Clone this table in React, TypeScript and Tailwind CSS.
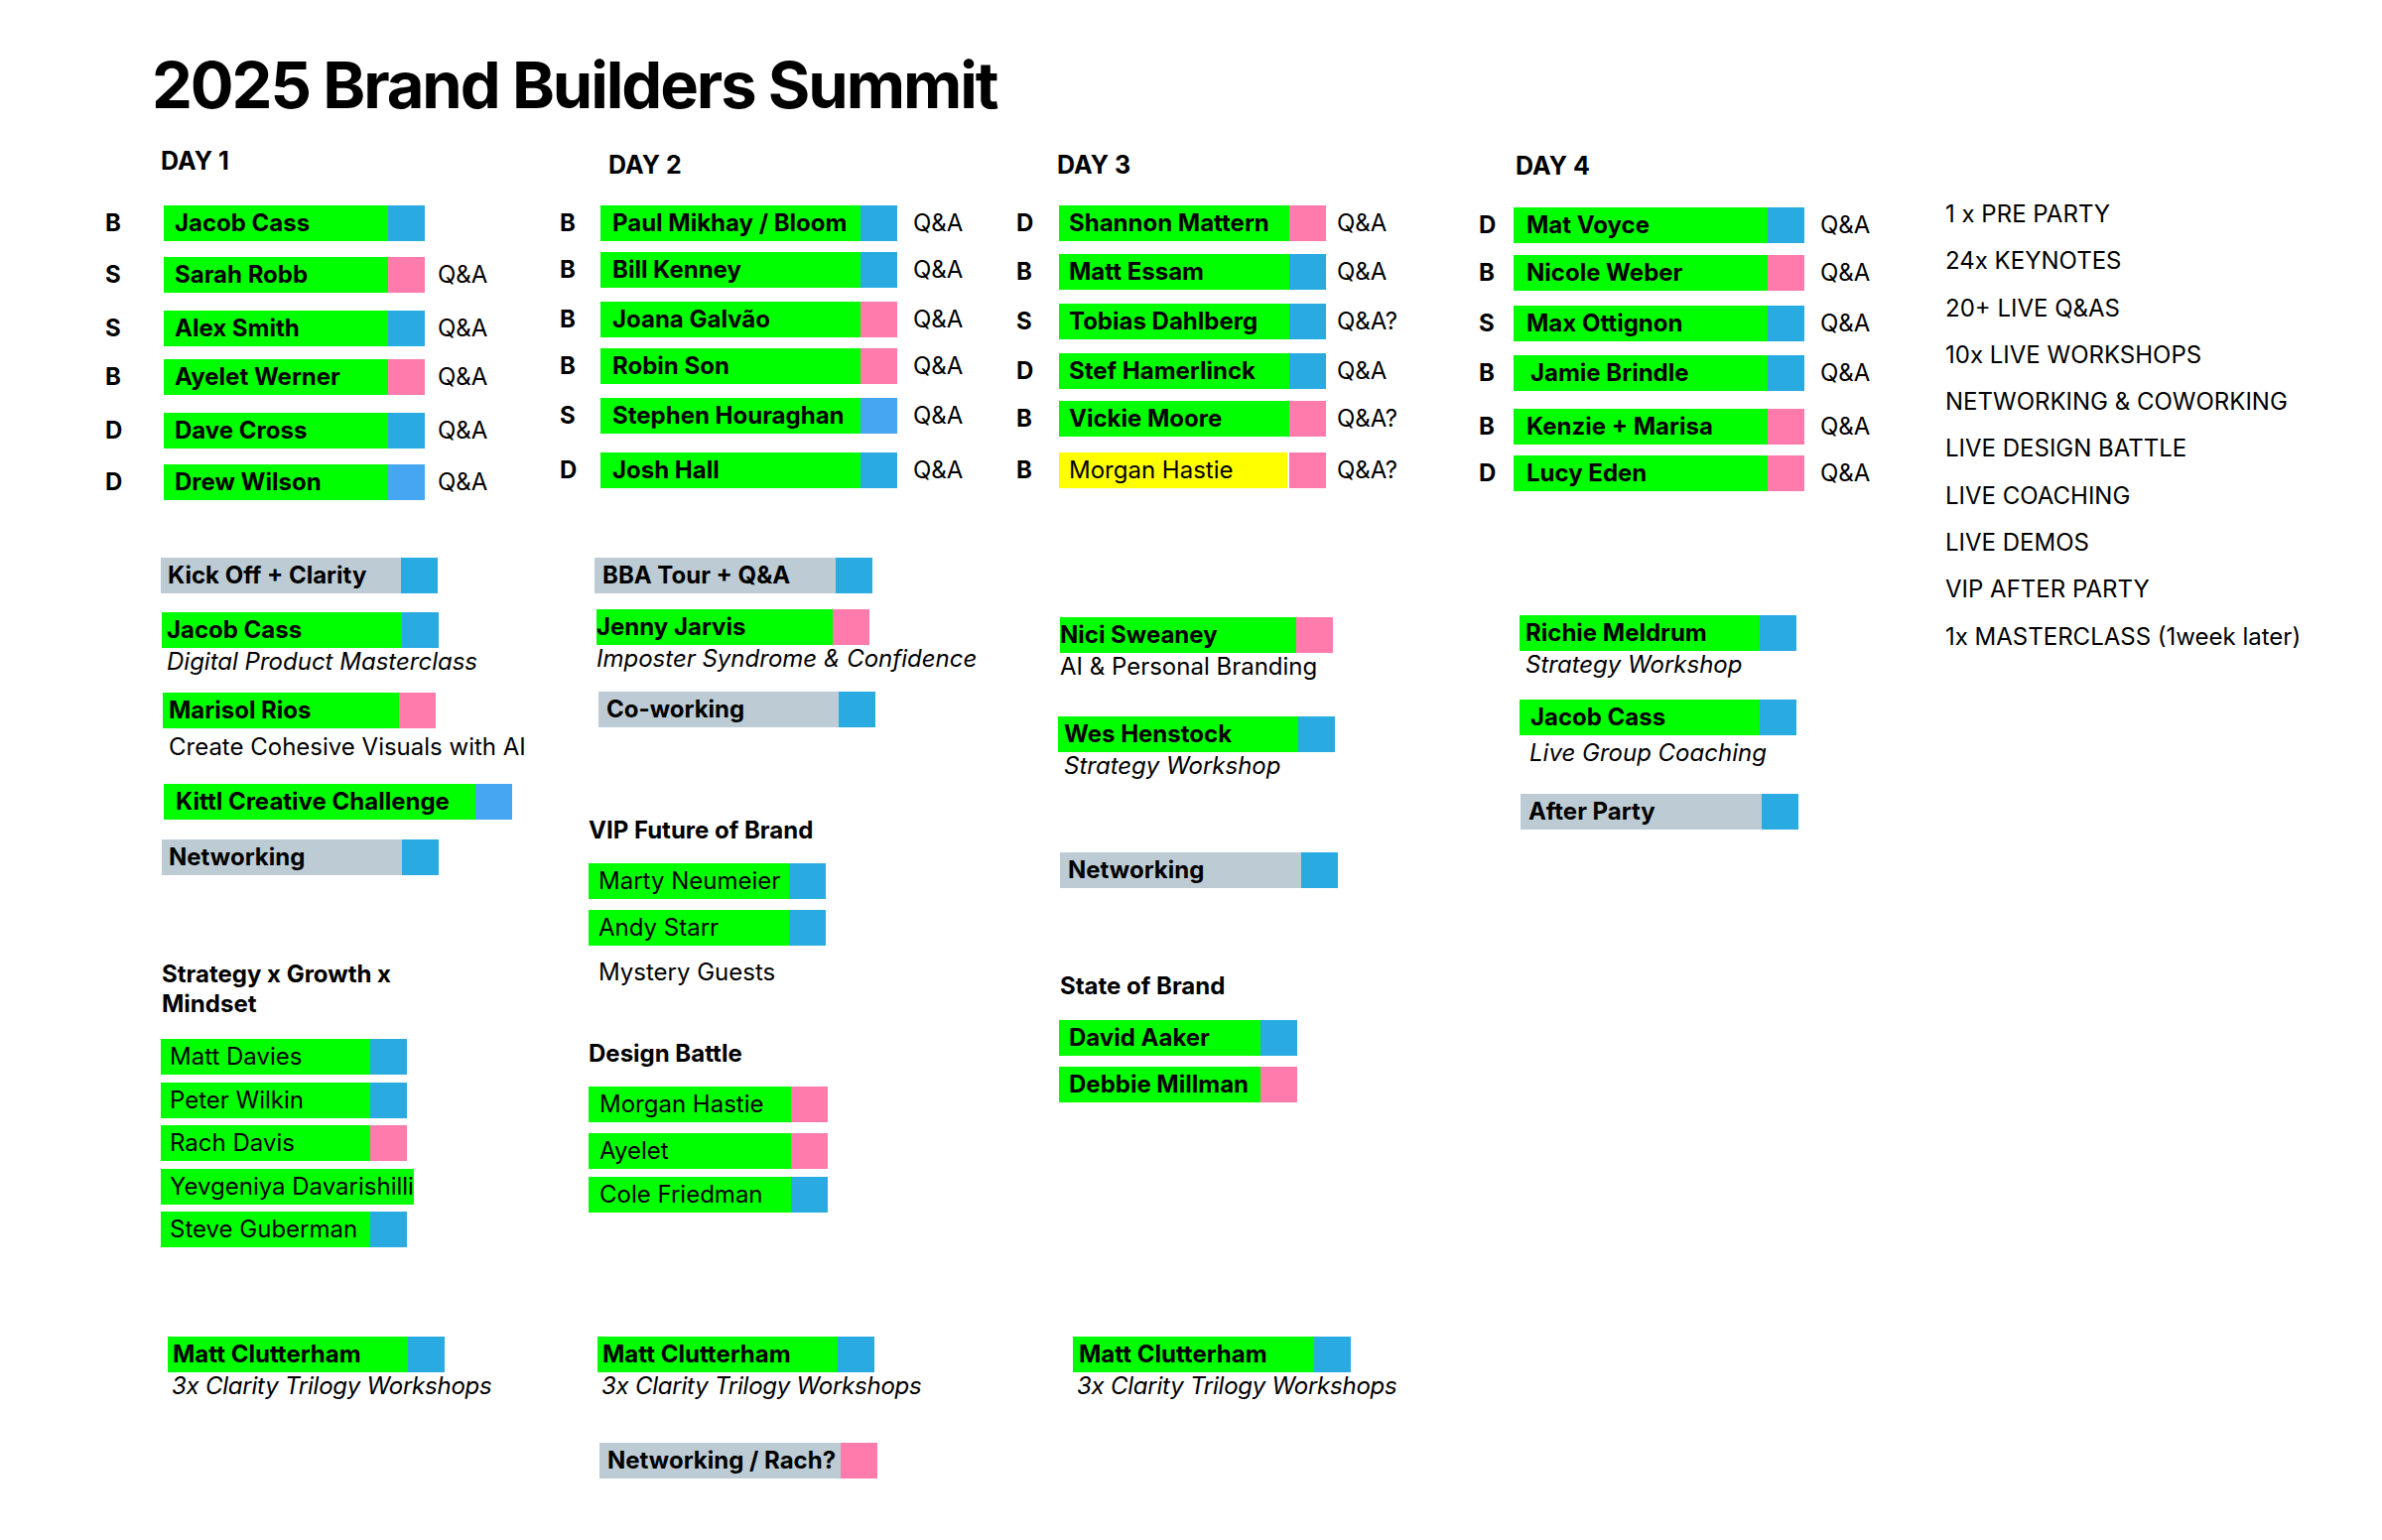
import type { ReactNode } from 'react';

type Seg = 'blue' | 'sky' | 'pink';
type Tone = 'green' | 'grey' | 'yellow';

const segBg: Record<Seg, string> = {
  blue: 'bg-[#29abe2]',
  sky: 'bg-[#46a6f2]',
  pink: 'bg-[#ff7bac]',
};

const toneBg: Record<Tone, string> = {
  green: 'bg-[#00ff00]',
  grey: 'bg-[#bdccd4]',
  yellow: 'bg-[#ffff00]',
};

type Row = { l: string; n: string; s: Seg; qa: string; mt: string; tone?: Tone; light?: boolean; pad?: string; split?: boolean };

// speaker rows at the top of each day
const day1: Row[] = [
  { l: 'B', n: 'Jacob Cass', s: 'blue', qa: '', mt: 'mt-[30px]' },
  { l: 'S', n: 'Sarah Robb', s: 'pink', qa: 'Q&A', mt: 'mt-[16px]' },
  { l: 'S', n: 'Alex Smith', s: 'blue', qa: 'Q&A', mt: 'mt-[18px]' },
  { l: 'B', n: 'Ayelet Werner', s: 'pink', qa: 'Q&A', mt: 'mt-[13px]' },
  { l: 'D', n: 'Dave Cross', s: 'blue', qa: 'Q&A', mt: 'mt-[18px]' },
  { l: 'D', n: 'Drew Wilson', s: 'sky', qa: 'Q&A', mt: 'mt-[16px]' },
];

const day2: Row[] = [
  { l: 'B', n: 'Paul Mikhay / Bloom', s: 'blue', qa: 'Q&A', mt: 'mt-[26px]' },
  { l: 'B', n: 'Bill Kenney', s: 'blue', qa: 'Q&A', mt: 'mt-[11px]' },
  { l: 'B', n: 'Joana Galvão', s: 'pink', qa: 'Q&A', mt: 'mt-[14px]' },
  { l: 'B', n: 'Robin Son', s: 'pink', qa: 'Q&A', mt: 'mt-[11px]' },
  { l: 'S', n: 'Stephen Houraghan', s: 'sky', qa: 'Q&A', mt: 'mt-[14px]' },
  { l: 'D', n: 'Josh Hall', s: 'blue', qa: 'Q&A', mt: 'mt-[19px]' },
];

const day3: Row[] = [
  { l: 'D', n: 'Shannon Mattern', s: 'pink', qa: 'Q&A', mt: 'mt-[26px]' },
  { l: 'B', n: 'Matt Essam', s: 'blue', qa: 'Q&A', mt: 'mt-[13px]' },
  { l: 'S', n: 'Tobias Dahlberg', s: 'blue', qa: 'Q&A?', mt: 'mt-[14px]' },
  { l: 'D', n: 'Stef Hamerlinck', s: 'blue', qa: 'Q&A', mt: 'mt-[14px]' },
  { l: 'B', n: 'Vickie Moore', s: 'pink', qa: 'Q&A?', mt: 'mt-[12px]' },
  { l: 'B', n: 'Morgan Hastie', s: 'pink', qa: 'Q&A?', mt: 'mt-[16px]', tone: 'yellow', light: true, split: true },
];

const day4: Row[] = [
  { l: 'D', n: 'Mat Voyce', s: 'blue', qa: 'Q&A', mt: 'mt-[27px]' },
  { l: 'B', n: 'Nicole Weber', s: 'pink', qa: 'Q&A', mt: 'mt-[12px]' },
  { l: 'S', n: 'Max Ottignon', s: 'blue', qa: 'Q&A', mt: 'mt-[15px]' },
  { l: 'B', n: 'Jamie Brindle', s: 'blue', qa: 'Q&A', mt: 'mt-[14px]', pad: 'pl-[17px]' },
  { l: 'B', n: 'Kenzie + Marisa', s: 'pink', qa: 'Q&A', mt: 'mt-[18px]' },
  { l: 'D', n: 'Lucy Eden', s: 'pink', qa: 'Q&A', mt: 'mt-[11px]' },
];

const highlights = [
  '1 x PRE PARTY',
  '24x KEYNOTES',
  '20+ LIVE Q&AS',
  '10x LIVE WORKSHOPS',
  'NETWORKING & COWORKING',
  'LIVE DESIGN BATTLE',
  'LIVE COACHING',
  'LIVE DEMOS',
  'VIP AFTER PARTY',
  '1x MASTERCLASS (1week later)',
];

function Bar({ label, seg, tone = 'green', light = false, pad = 'pl-[8px]', split = false, className = '' }: {
  label: string; seg: Seg; tone?: Tone; light?: boolean; pad?: string; split?: boolean; className?: string;
}) {
  return (
    <div className={`flex h-[36px] shrink-0 ${split ? 'gap-[2px]' : ''} ${className}`}>
      <div className={`flex-1 flex items-center whitespace-nowrap ${toneBg[tone]} ${pad}`}>
        <span className={`relative ${light ? 'font-normal' : 'font-bold'}`}>{label}</span>
      </div>
      <div className={`w-[37px] ${segBg[seg]}`} />
    </div>
  );
}

function DayRows({ rows, lead, bar, gap, pad }: { rows: Row[]; lead: string; bar: string; gap: string; pad: string }) {
  return (
    <>
      {rows.map(r => (
        <div key={r.n} className={`flex items-center h-[36px] ${r.mt}`}>
          <span className={`${lead} text-[24px] font-bold`}>{r.l}</span>
          <Bar label={r.n} seg={r.s} tone={r.tone} light={r.light} split={r.split} pad={r.pad ?? pad} className={bar} />
          {r.qa && <span className={`${gap} text-[24px]`}>{r.qa}</span>}
        </div>
      ))}
    </>
  );
}

const DayHeader = ({ children, className }: { children: ReactNode; className: string }) => (
  <div className={`text-[25px] font-bold leading-[30px] ${className}`}>{children}</div>
);

const Heading = ({ children, className }: { children: ReactNode; className: string }) => (
  <div className={`font-bold leading-[30px] ${className}`}>{children}</div>
);

const Note = ({ children, className, italic = true }: { children: ReactNode; className: string; italic?: boolean }) => (
  <div className={`leading-[28px] whitespace-nowrap ${italic ? 'italic' : ''} ${className}`}>{children}</div>
);

export default function App() {
  return (
    <div className="w-[2400px] h-[1552px] overflow-hidden bg-white text-black text-[24px] font-['Inter','Liberation_Sans',sans-serif]">
      <h1 className="pt-[46px] pl-[153px] text-[65px] font-bold leading-[80px] tracking-[-0.032em]">2025 Brand Builders Summit</h1>

      <div className="mt-[14px] pl-[106px] flex items-start">
        {/* ── Day 1 ── */}
        <div className="w-[458px] shrink-0 flex flex-col items-start">
          <DayHeader className="mt-[7px] ml-[56px]">DAY 1</DayHeader>
          <DayRows rows={day1} lead="w-[59px]" bar="w-[263px]" gap="ml-[13px]" pad="pl-[11px]" />

          <Bar label="Kick Off + Clarity" tone="grey" seg="blue" pad="pl-[7px]" className="mt-[58px] ml-[56px] w-[279px]" />
          <Bar label="Jacob Cass" seg="blue" pad="pl-[5px]" className="mt-[19px] ml-[57px] w-[279px]" />
          <Note className="ml-[62px]">Digital Product Masterclass</Note>
          <Bar label="Marisol Rios" seg="pink" pad="pl-[6px]" className="mt-[17px] ml-[58px] w-[275px]" />
          <Note italic={false} className="mt-[4px] ml-[64px] leading-[30px]">Create Cohesive Visuals with AI</Note>
          <Bar label="Kittl Creative Challenge" seg="sky" pad="pl-[12px]" className="mt-[22px] ml-[59px] w-[351px]" />
          <Bar label="Networking" tone="grey" seg="blue" pad="pl-[7px]" className="mt-[20px] ml-[57px] w-[279px]" />

          <Heading className="mt-[85px] ml-[57px]">Strategy x Growth x<br />Mindset</Heading>
          <Bar label="Matt Davies" seg="blue" light pad="pl-[9px]" className="mt-[20px] ml-[56px] w-[248px]" />
          <Bar label="Peter Wilkin" seg="blue" light pad="pl-[9px]" className="mt-[8px] ml-[56px] w-[248px]" />
          <Bar label="Rach Davis" seg="pink" light pad="pl-[9px]" className="mt-[7px] ml-[56px] w-[248px]" />
          <Bar label="Yevgeniya Davarishilli" seg="pink" light pad="pl-[9px]" className="mt-[8px] ml-[56px] w-[248px]" />
          <Bar label="Steve Guberman" seg="blue" light pad="pl-[9px]" className="mt-[7px] ml-[56px] w-[248px]" />

          <Bar label="Matt Clutterham" seg="blue" pad="pl-[5px]" className="mt-[90px] ml-[63px] w-[279px]" />
          <Note className="ml-[67px] tracking-[-0.01em]">3x Clarity Trilogy Workshops</Note>
        </div>

        {/* ── Day 2 ── */}
        <div className="w-[460px] shrink-0 flex flex-col items-start">
          <DayHeader className="mt-[11px] ml-[49px]">DAY 2</DayHeader>
          <DayRows rows={day2} lead="w-[41px]" bar="w-[299px]" gap="ml-[16px]" pad="pl-[12px]" />

          <Bar label="BBA Tour + Q&A" tone="grey" seg="blue" pad="pl-[8px]" className="mt-[70px] ml-[35px] w-[280px]" />
          <Bar label="Jenny Jarvis" seg="pink" pad="pl-0" className="mt-[16px] ml-[37px] w-[275px]" />
          <Note className="ml-[37px]">Imposter Syndrome &amp; Confidence</Note>
          <Bar label="Co-working" tone="grey" seg="blue" pad="pl-[8px]" className="mt-[19px] ml-[39px] w-[279px]" />

          <Heading className="mt-[89px] ml-[29px]">VIP Future of Brand</Heading>
          <Bar label="Marty Neumeier" seg="blue" light pad="pl-[10px]" className="mt-[18px] ml-[29px] w-[239px]" />
          <Bar label="Andy Starr" seg="blue" light pad="pl-[10px]" className="mt-[11px] ml-[29px] w-[239px]" />
          <Note italic={false} className="mt-[12px] ml-[39px] leading-[30px]">Mystery Guests</Note>

          <Heading className="mt-[52px] ml-[29px]">Design Battle</Heading>
          <Bar label="Morgan Hastie" seg="pink" light pad="pl-[11px]" className="mt-[18px] ml-[29px] w-[241px]" />
          <Bar label="Ayelet" seg="pink" light pad="pl-[11px]" className="mt-[11px] ml-[29px] w-[241px]" />
          <Bar label="Cole Friedman" seg="blue" light pad="pl-[11px]" className="mt-[8px] ml-[29px] w-[241px]" />

          <Bar label="Matt Clutterham" seg="blue" pad="pl-[5px]" className="mt-[125px] ml-[38px] w-[279px]" />
          <Note className="ml-[42px] tracking-[-0.01em]">3x Clarity Trilogy Workshops</Note>
          <Bar label="Networking / Rach?" tone="grey" seg="pink" pad="pl-[8px]" className="mt-[43px] ml-[40px] w-[280px]" />
        </div>

        {/* ── Day 3 ── */}
        <div className="w-[466px] shrink-0 flex flex-col items-start">
          <DayHeader className="mt-[11px] ml-[41px]">DAY 3</DayHeader>
          <DayRows rows={day3} lead="w-[43px]" bar="w-[269px]" gap="ml-[11px]" pad="pl-[10px]" />

          <Bar label="Nici Sweaney" seg="pink" pad="pl-0" className="mt-[130px] ml-[44px] w-[275px]" />
          <Note italic={false} className="ml-[44px]">AI &amp; Personal Branding</Note>
          <Bar label="Wes Henstock" seg="blue" pad="pl-[6px]" className="mt-[36px] ml-[42px] w-[279px]" />
          <Note className="ml-[48px]">Strategy Workshop</Note>
          <Bar label="Networking" tone="grey" seg="blue" pad="pl-[8px]" className="mt-[73px] ml-[44px] w-[280px]" />

          <Heading className="mt-[84px] ml-[44px]">State of Brand</Heading>
          <Bar label="David Aaker" seg="blue" pad="pl-[10px]" className="mt-[19px] ml-[43px] w-[240px]" />
          <Bar label="Debbie Millman" seg="pink" pad="pl-[10px]" className="mt-[11px] ml-[43px] w-[240px]" />

          <Bar label="Matt Clutterham" seg="blue" pad="pl-[6px]" className="mt-[236px] ml-[57px] w-[280px]" />
          <Note className="ml-[61px] tracking-[-0.01em]">3x Clarity Trilogy Workshops</Note>
        </div>

        {/* ── Day 4 ── */}
        <div className="w-[470px] shrink-0 flex flex-col items-start">
          <DayHeader className="mt-[12px] ml-[37px]">DAY 4</DayHeader>
          <DayRows rows={day4} lead="w-[35px]" bar="w-[293px]" gap="ml-[16px]" pad="pl-[13px]" />

          <Bar label="Richie Meldrum" seg="blue" pad="pl-[6px]" className="mt-[125px] ml-[41px] w-[279px]" />
          <Note className="ml-[47px] leading-[24px]">Strategy Workshop</Note>
          <Bar label="Jacob Cass" seg="blue" pad="pl-[11px]" className="mt-[21px] ml-[41px] w-[279px]" />
          <Note className="mt-[4px] ml-[51px]">Live Group Coaching</Note>
          <Bar label="After Party" tone="grey" seg="blue" pad="pl-[8px]" className="mt-[27px] ml-[42px] w-[280px]" />
        </div>

        {/* ── What's included ── */}
        <ul className="flex-1 mt-[52px] leading-[47.3px]">
          {highlights.map(h => <li key={h} className="whitespace-nowrap">{h}</li>)}
        </ul>
      </div>
    </div>
  );
}
